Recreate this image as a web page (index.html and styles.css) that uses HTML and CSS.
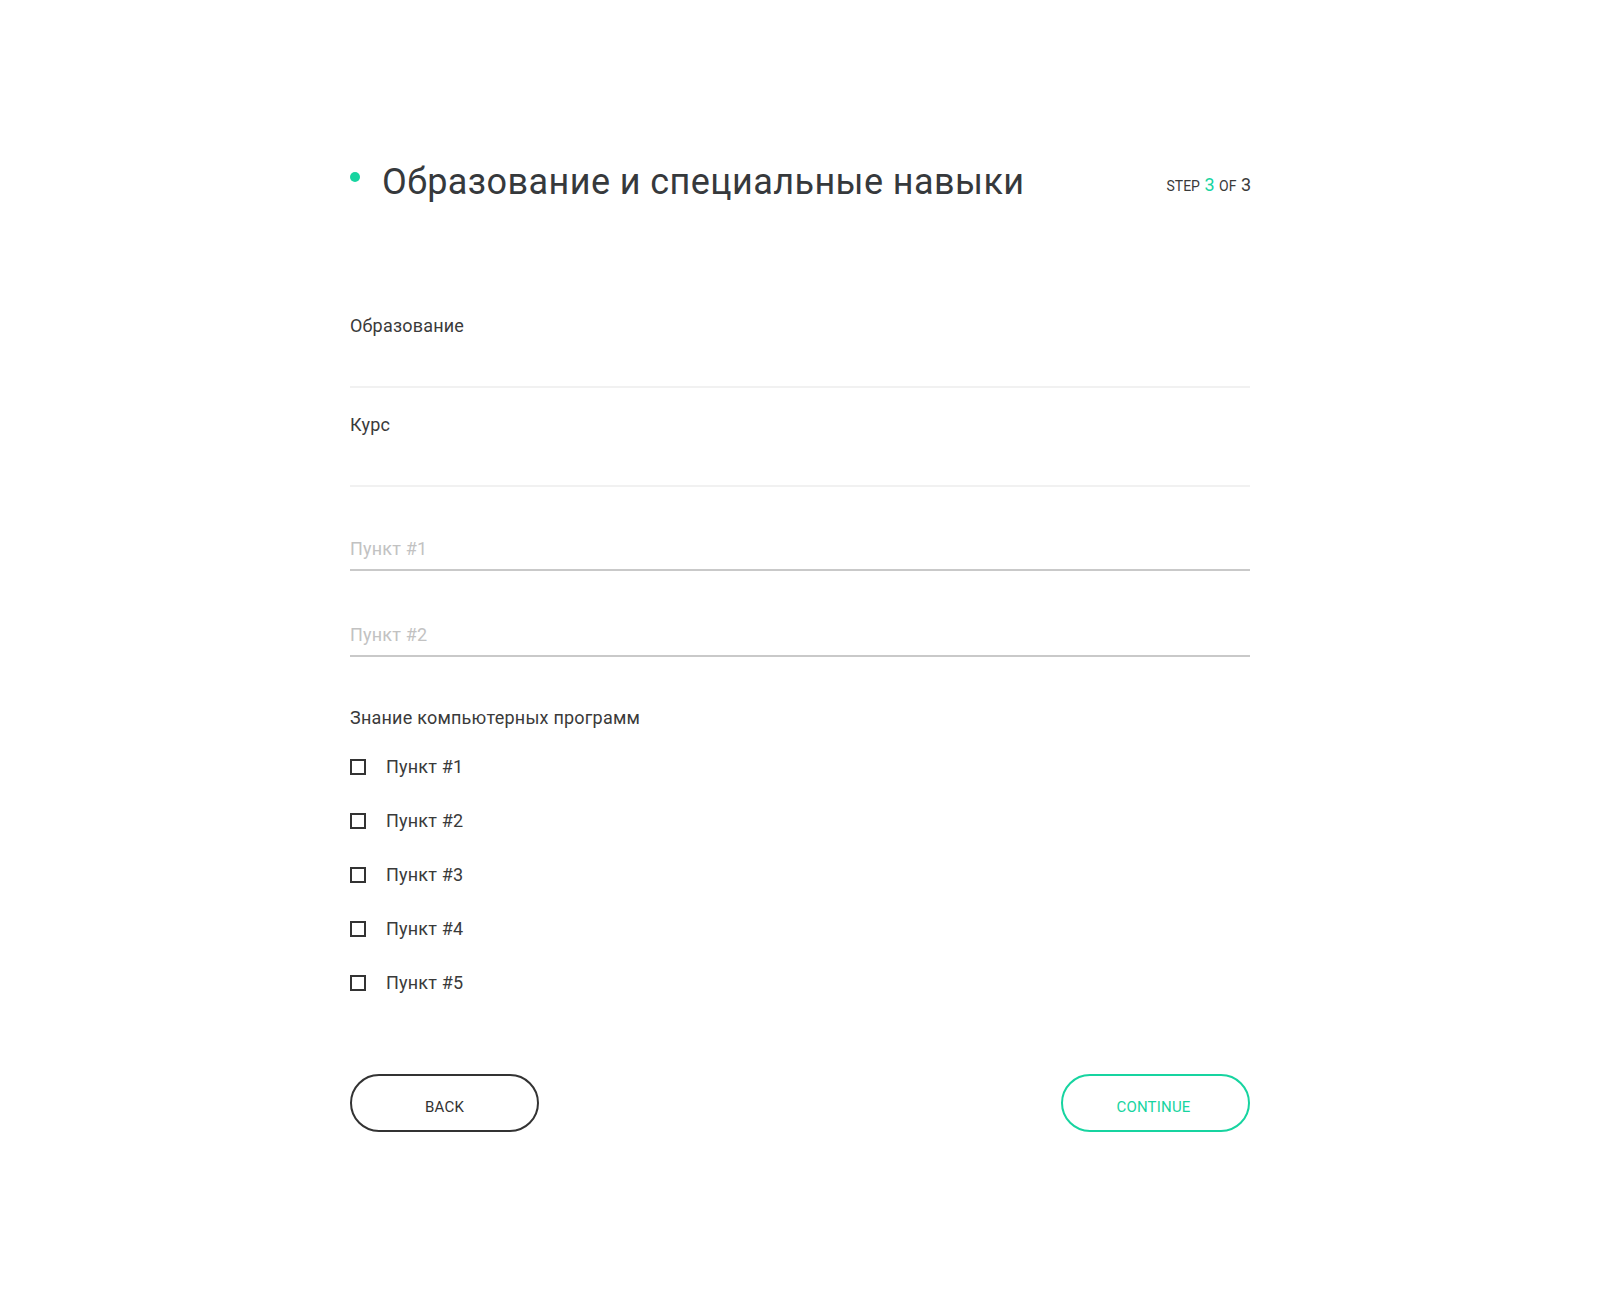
FILE: index.html
```html
<!DOCTYPE html>
<html lang="ru">
<head>
<meta charset="utf-8">
<title>Образование и специальные навыки</title>
<link rel="stylesheet" href="styles.css">
</head>
<body>
<main class="page">
  <header class="header">
    <div class="title-group">
      <span class="dot"></span>
      <h1 class="title">Образование и специальные навыки</h1>
    </div>
    <div class="step">STEP <span class="step-num step-current">3</span> OF <span class="step-num">3</span></div>
  </header>

  <form class="form">
    <div class="field field-first">
      <label class="field-label">Образование</label>
      <div class="field-input"></div>
    </div>
    <div class="field">
      <label class="field-label">Курс</label>
      <div class="field-input"></div>
    </div>

    <input class="text-input text-input-first" type="text" placeholder="Пункт #1">
    <input class="text-input" type="text" placeholder="Пункт #2">

    <div class="group-label">Знание компьютерных программ</div>
    <ul class="checklist">
      <li class="check-row"><span class="box"></span><span class="check-text">Пункт #1</span></li>
      <li class="check-row"><span class="box"></span><span class="check-text">Пункт #2</span></li>
      <li class="check-row"><span class="box"></span><span class="check-text">Пункт #3</span></li>
      <li class="check-row"><span class="box"></span><span class="check-text">Пункт #4</span></li>
      <li class="check-row"><span class="box"></span><span class="check-text">Пункт #5</span></li>
    </ul>

    <div class="actions">
      <button type="button" class="btn btn-back">BACK</button>
      <button type="button" class="btn btn-continue">CONTINUE</button>
    </div>
  </form>
</main>
</body>
</html>
```

FILE: styles.css
```css
* { box-sizing: border-box; }

html, body {
  margin: 0;
  padding: 0;
  background: #ffffff;
}

body {
  font-family: Roboto, "Noto Sans", "Liberation Sans", sans-serif;
  color: #3a3a3a;
}

.page {
  width: 900px;
  margin: 0 auto;
  padding-top: 160px;
  padding-bottom: 100px;
}

.header {
  display: flex;
  align-items: center;
  justify-content: space-between;
  height: 44px;
}

.title-group {
  display: flex;
  align-items: center;
  gap: 22px;
}

.dot {
  width: 10px;
  height: 10px;
  border-radius: 50%;
  background: #17d4a0;
  margin-bottom: 10px;
}

.title {
  margin: 0;
  font-size: 36px;
  font-weight: 400;
  line-height: 44px;
  color: #36393c;
  letter-spacing: 0.42px;
}

.step {
  font-size: 14px;
  line-height: 44px;
  color: #3a3a3a;
  margin-right: -2px;
  padding-top: 6px;
}

.step-num {
  font-size: 18px;
  margin: 0 1px;
}

.step-current {
  color: #17d4a0;
}

.form {
  display: flex;
  flex-direction: column;
  margin-top: 85px;
}

.field {
  display: flex;
  flex-direction: column;
  padding-top: 26px;
}

.field-label {
  font-size: 18px;
  line-height: 22px;
  letter-spacing: 0.2px;
  color: #3a3a3a;
}

.field-input {
  height: 51px;
  border-bottom: 2px solid #f1f1f1;
}

.text-input {
  display: block;
  width: 100%;
  height: 34px;
  margin: 52px 0 0;
  padding: 0 0 10px;
  border: none;
  border-bottom: 2px solid #c9c9c9;
  font-family: Roboto, "Noto Sans", "Liberation Sans", sans-serif;
  font-size: 18px;
  line-height: 22px;
  letter-spacing: 0.2px;
  color: #3a3a3a;
  background: transparent;
  outline: none;
}

.text-input-first {
  margin-top: 50px;
}

.text-input::placeholder {
  color: #c2c2c2;
}

.group-label {
  margin-top: 50px;
  font-size: 18px;
  line-height: 22px;
  letter-spacing: 0.22px;
  color: #3a3a3a;
}

.checklist {
  list-style: none;
  margin: 26px 0 0;
  padding: 0;
  display: flex;
  flex-direction: column;
  gap: 30px;
}

.check-row {
  display: flex;
  align-items: center;
  height: 24px;
  gap: 20px;
}

.box {
  width: 16px;
  height: 16px;
  border: 2px solid #333333;
  flex: none;
}

.check-text {
  font-size: 18px;
  line-height: 22px;
  letter-spacing: 0.2px;
  color: #3a3a3a;
}

.actions {
  display: flex;
  justify-content: space-between;
  margin-top: 79px;
}

.btn {
  width: 189px;
  height: 58px;
  border-radius: 29px;
  background: #ffffff;
  font-family: Roboto, "Noto Sans", "Liberation Sans", sans-serif;
  font-size: 15px;
  letter-spacing: 0.2px;
  padding-top: 8px;
  cursor: pointer;
}

.btn-back {
  border: 2px solid #333333;
  color: #333333;
}

.btn-continue {
  border: 2px solid #17d4a0;
  color: #17d4a0;
  padding-right: 10px;
}
```
